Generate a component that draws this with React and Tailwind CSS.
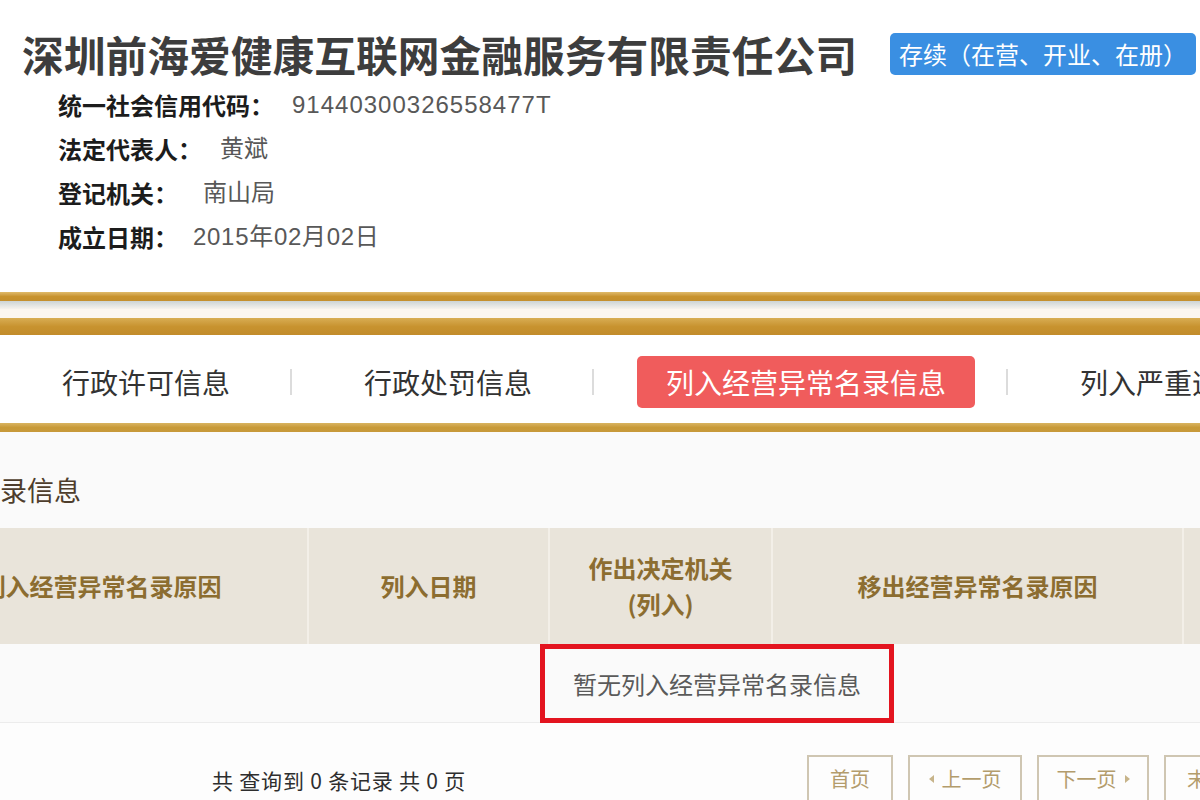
import React from 'react';

const cjk = "font-['Noto_Sans_CJK_SC','Noto_Sans',sans-serif]";
const mixed = "font-['Liberation_Sans','Noto_Sans_CJK_SC',sans-serif]";

const info = [
  { label: '统一社会信用代码：', value: '91440300326558477T', gap: 'ml-[18px] tracking-[1px]' },
  { label: '法定代表人：', value: '黄斌', gap: 'ml-[18px]' },
  { label: '登记机关：', value: '南山局', gap: 'ml-[25px]' },
  { label: '成立日期：', value: '2015年02月02日', gap: 'ml-[15px] tracking-[0.7px]' },
];

const tabs = ['行政许可信息', '行政处罚信息', '列入经营异常名录信息', '列入严重违法失信企业名单信息'];

function Arrow({ dir }) {
  return (
    <svg width="5" height="8" viewBox="0 0 5 8" className="block">
      {dir === 'left' ? <path d="M5 0 L0 4 L5 8 Z" fill="#c7b48a" /> : <path d="M0 0 L5 4 L0 8 Z" fill="#c7b48a" />}
    </svg>
  );
}

function PageBtn({ w, children }) {
  return (
    <span className={`${w} h-[50px] border-2 border-[#cfc6b2] pt-[7px] shrink-0`}>
      <span className="flex items-center justify-center gap-[8px] h-[30px]">{children}</span>
    </span>
  );
}

export default function App() {
  return (
    <div className={`w-[1200px] h-[800px] overflow-hidden bg-white ${cjk}`}>
      {/* company header */}
      <div className="pt-[32px] pl-[22px] flex items-center h-[76px]">
        <h1 className="text-[41.75px] leading-[44px] font-bold text-[#3d3d3d] whitespace-nowrap">
          深圳前海爱健康互联网金融服务有限责任公司
        </h1>
        <span className="ml-[33px] h-[42px] px-[9px] rounded-[5px] bg-[#3a8fe2] text-white text-[24px] leading-[42px] whitespace-nowrap">
          存续（在营、开业、在册）
        </span>
      </div>

      <div className="mt-[7px] pl-[58px]">
        {info.map((r) => (
          <div key={r.label} className="flex items-center h-[44px] text-[24px]">
            <span className="font-bold text-[#1c1c1c]">{r.label}</span>
            <span className={`${r.gap} text-[#585858] ${mixed}`}>{r.value}</span>
          </div>
        ))}
      </div>

      {/* gold rules */}
      <div className="mt-[33px]">
        <div className="h-[9px] bg-gradient-to-b from-[#e0bb6a] via-[#c8932e] to-[#c48f2d]" />
        <div className="h-[8px] bg-gradient-to-b from-[#cdd4d4] to-[#f6f2ec]" />
        <div className="h-[9px] bg-[#fbf6ef]" />
        <div className="h-[17px] bg-gradient-to-b from-[#d8ad52] via-[#c8932f] to-[#c28c2b]" />
      </div>

      {/* tabs */}
      <div className="h-[88px] bg-white flex items-center pl-[33px] pt-[6px] whitespace-nowrap">
        {tabs.map((t, i) => (
          <React.Fragment key={t}>
            {i > 0 && <span className="ml-[31px] mr-[43px] w-[2px] h-[26px] bg-[#dcdcdc] shrink-0" />}
            <span
              className={
                i === 2
                  ? 'h-[52px] leading-[52px] px-[29px] rounded-[5px] bg-[#f05c5c] text-white text-[28px] shrink-0'
                  : 'h-[52px] leading-[52px] px-[29px] text-[#333] text-[28px] shrink-0'
              }
            >
              {t}
            </span>
          </React.Fragment>
        ))}
      </div>
      <div className="h-[9px] bg-gradient-to-b from-[#d9b460] via-[#c89a38] to-[#c7993a]" />

      {/* list section */}
      <div className="bg-[#fafafa] h-[368px]">
        <div className="pt-[38px] h-[78px] overflow-hidden">
          <div className="-ml-[189px] text-[27px] leading-[40px] text-[#4e3d2c] whitespace-nowrap">列入经营异常名录信息</div>
        </div>

        <div className="mt-[18px] -ml-[104px] w-[1400px] grid grid-cols-[411px_241px_223px_411px_1fr] h-[116px] bg-[#e9e4da] text-[24px] font-bold text-[#8c6d30] text-center">
          <div className="flex items-center justify-center">列入经营异常名录原因</div>
          <div className="flex items-center justify-center border-l-2 border-[#f3efe8]">列入日期</div>
          <div className="flex flex-col items-center justify-center border-l-2 border-[#f3efe8] leading-[36px]">
            <span>作出决定机关</span>
            <span>(列入)</span>
          </div>
          <div className="flex items-center justify-center border-l-2 border-[#f3efe8]">移出经营异常名录原因</div>
          <div className="border-l-2 border-[#f3efe8]" />
        </div>

        <div className="h-[79px] border-b border-[#ececec] bg-[#fafafa] flex items-start">
          <span className="ml-[540px] w-[354px] h-[79px] border-[5px] border-[#e3141f] flex items-center justify-center text-[24px] text-[#5a5a5a] whitespace-nowrap">
            暂无列入经营异常名录信息
          </span>
        </div>

        <div className="bg-[#fdfdfd] h-[100px] flex items-start pt-[32px] whitespace-nowrap">
          <div className="w-[807px] pl-[212px] pt-[11px] text-[21px] leading-[28px] tracking-[0.8px] text-[#2e2e2e] shrink-0">
            共 查询到 0 条记录 共 0 页
          </div>
          <div className="flex gap-[15px] text-[20px] text-[#b39c6c]">
            <PageBtn w="w-[86px]">首页</PageBtn>
            <PageBtn w="w-[114px]">
              <Arrow dir="left" />
              上一页
            </PageBtn>
            <PageBtn w="w-[112px]">
              下一页
              <Arrow dir="right" />
            </PageBtn>
            <PageBtn w="w-[86px]">末页</PageBtn>
          </div>
        </div>
      </div>
    </div>
  );
}
